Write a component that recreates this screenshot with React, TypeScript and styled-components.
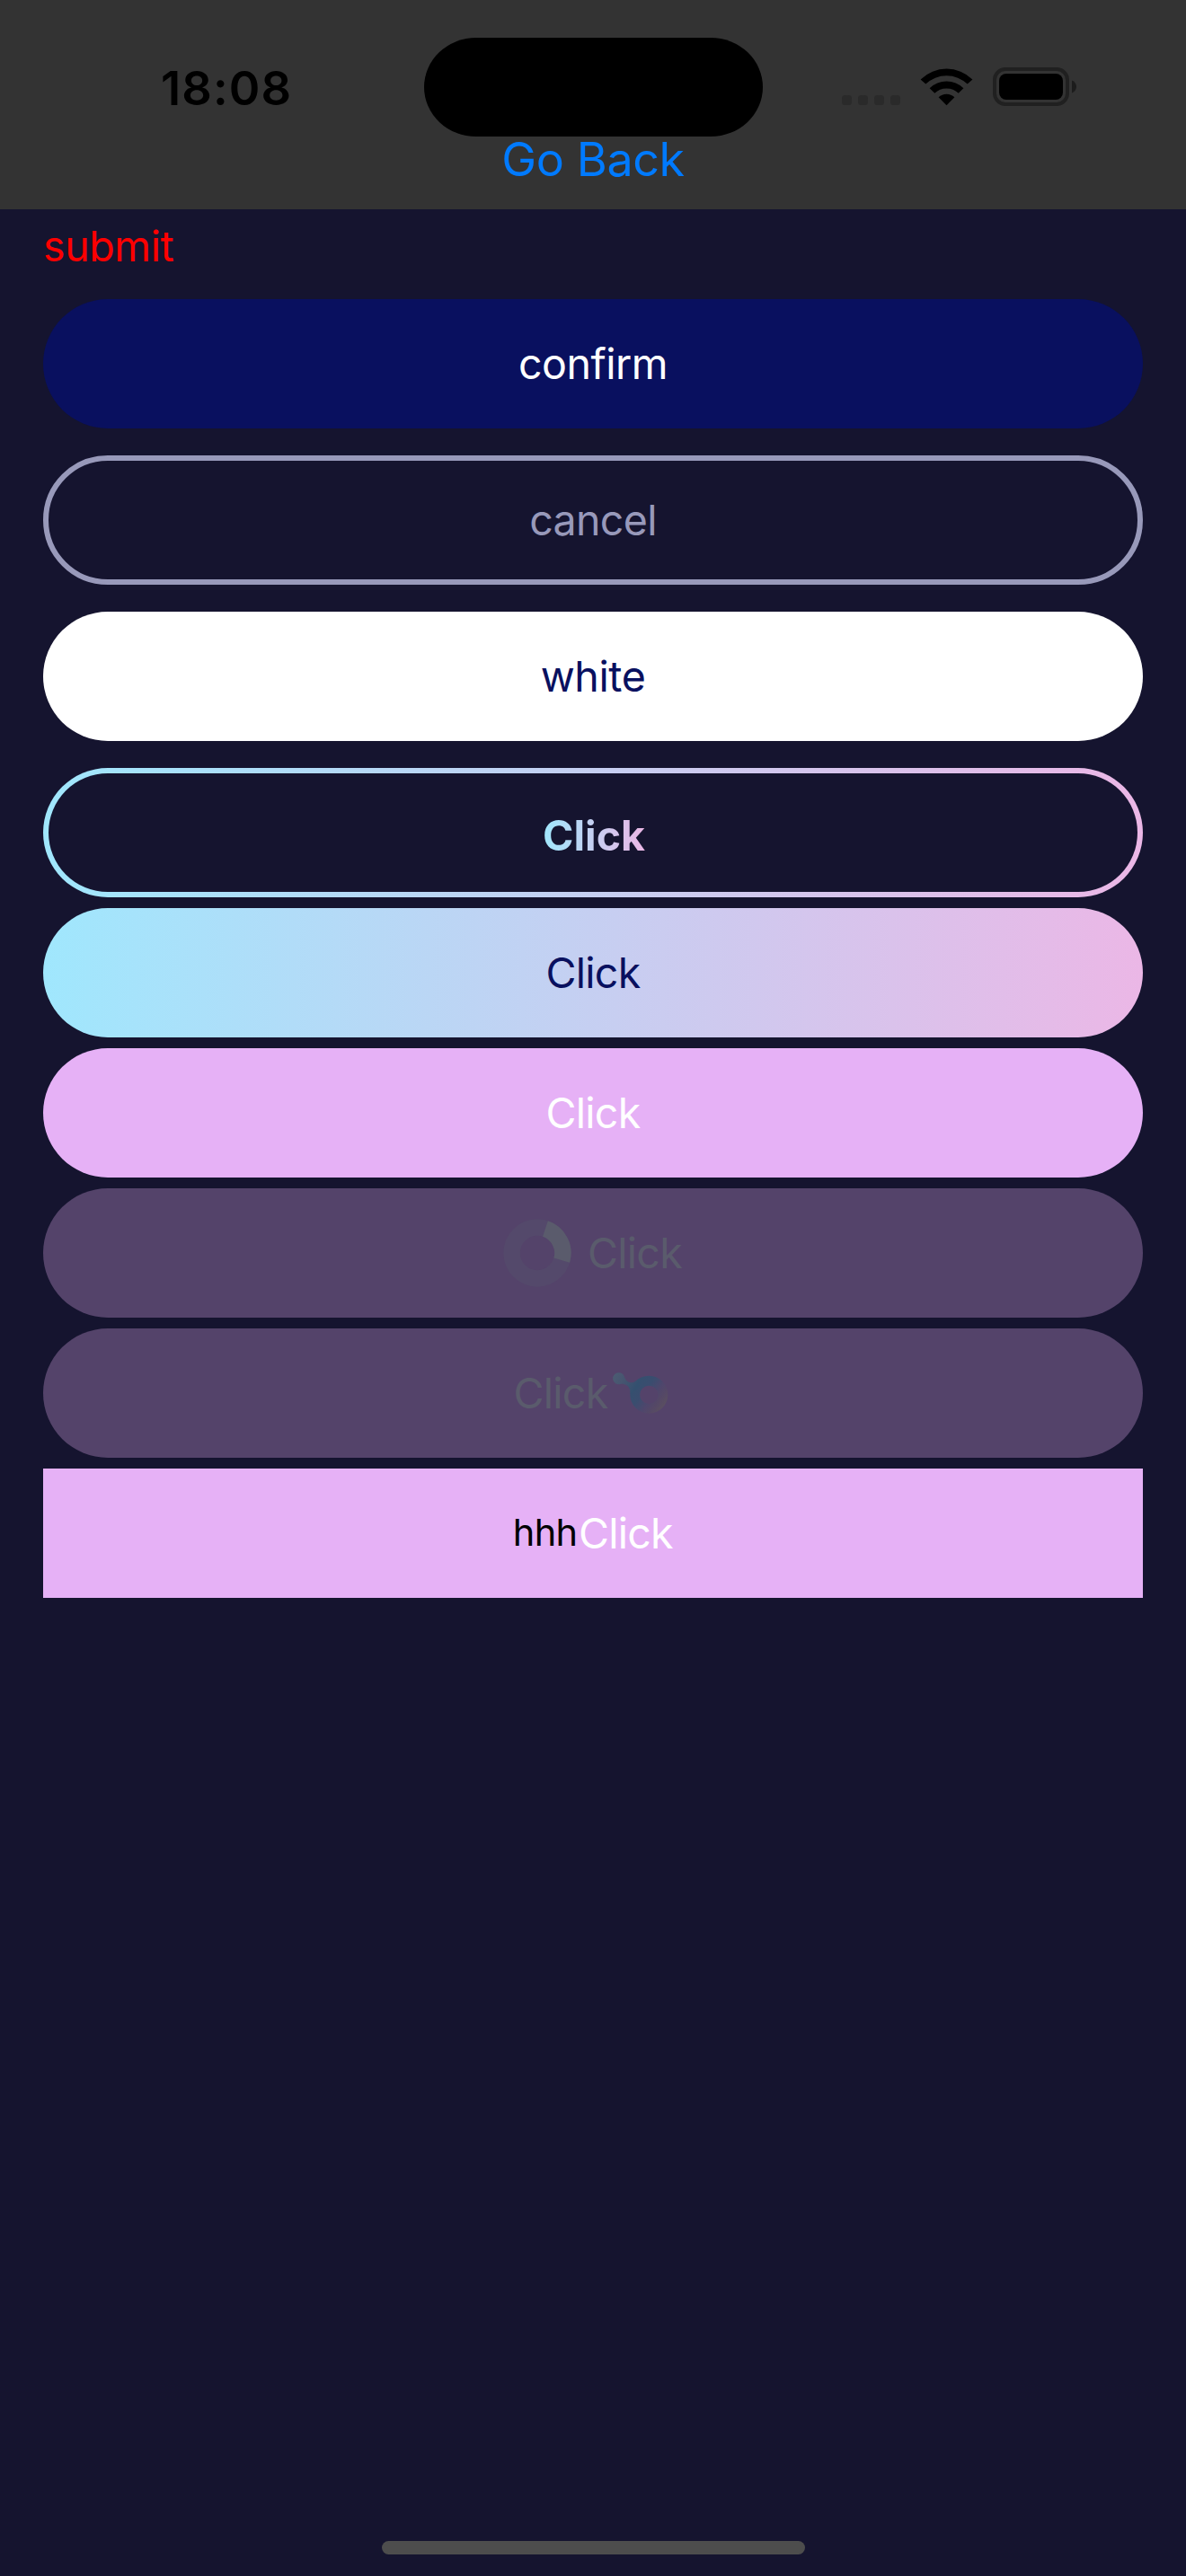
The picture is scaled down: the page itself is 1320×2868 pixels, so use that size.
import React from "react";
import styled, { createGlobalStyle, css } from "styled-components";

const colors = {
  page: "#15142f",
  header: "#333333",
  navy: "#09105f",
  muted: "#9899ba",
  pink: "#e6b1f6",
  disabled: "#54436a",
  disabledText: "#5a5b6c",
  link: "#007aff",
};

const brandGradient = "linear-gradient(90deg, #a0e7fd 0%, #ebb7e6 100%)";

const GlobalStyle = createGlobalStyle`
  html, body { margin: 0; background: ${colors.page}; }
  *, *::before, *::after { box-sizing: border-box; }
`;

const Screen = styled.div`
  display: flex;
  flex-direction: column;
  width: 1320px;
  height: 2868px;
  background: ${colors.page};
  font-family: Inter, "Liberation Sans", sans-serif;
  font-size: 46.5px;
`;

const Header = styled.header`
  display: flex;
  flex-direction: column;
  align-items: center;
  flex: none;
  height: 233px;
  padding-top: 42px;
  background: ${colors.header};
`;

const StatusBar = styled.div`
  display: grid;
  grid-template-columns: 472px 377px 1fr;
  align-items: center;
  width: 100%;
  height: 110px;
`;

const Time = styled.time`
  padding: 2px 0 0 179px;
  font-size: 52.5px;
  font-weight: 600;
  line-height: 60px;
  letter-spacing: 1.1px;
  color: #000;
`;

const Island = styled.div`
  height: 110px;
  border-radius: 58px / 55px;
  background: #000;
`;

const StatusIcons = styled.div`
  display: flex;
  align-items: center;
  gap: 22px;
  padding: 0 0 1px 88px;

  svg {
    display: block;
    flex: none;
  }
`;

const BackLink = styled.button`
  height: 52px;
  padding: 0;
  border: 0;
  background: none;
  font: 400 52px/52px Inter, "Liberation Sans", sans-serif;
  letter-spacing: -0.4px;
  color: ${colors.link};
`;

const Content = styled.main`
  display: flex;
  flex-direction: column;
  padding: 0 48px;
`;

const SubmitLink = styled.button`
  align-self: flex-start;
  height: 82px;
  margin-bottom: 18px;
  padding: 0;
  border: 0;
  background: none;
  font: inherit;
  line-height: 82px;
  letter-spacing: -0.4px;
  color: #ff0000;
`;

const ButtonGroup = styled.div<{ $gap: number }>`
  display: flex;
  flex-direction: column;
  gap: ${(p) => p.$gap}px;

  & + & {
    margin-top: 12px;
  }
`;

type Variant =
  | "confirm"
  | "cancel"
  | "white"
  | "outline"
  | "gradient"
  | "pink"
  | "disabled";

const variants = {
  confirm: css`
    background: ${colors.navy};
    color: #fff;
    letter-spacing: -0.45px;
  `,
  cancel: css`
    border: 6px solid ${colors.muted};
    color: ${colors.muted};
    letter-spacing: -0.65px;
  `,
  white: css`
    background: #fff;
    color: ${colors.navy};
    letter-spacing: -0.4px;
  `,
  outline: css`
    border: 6px solid transparent;
    padding: 6px 0 0 2px;
    background: linear-gradient(${colors.page}, ${colors.page}) padding-box,
      ${brandGradient} border-box;
  `,
  gradient: css`
    background: ${brandGradient};
    color: ${colors.navy};
  `,
  pink: css`
    background: ${colors.pink};
    color: #fff;
  `,
  disabled: css`
    background: ${colors.disabled};
    color: ${colors.disabledText};
  `,
};

const Button = styled.button<{ $variant: Variant; $square?: boolean }>`
  display: flex;
  align-items: center;
  justify-content: center;
  width: 100%;
  height: 144px;
  padding: 0;
  border: 0;
  border-radius: ${(p) => (p.$square ? 0 : 72)}px;
  background: none;
  font: inherit;
  line-height: 56px;
  letter-spacing: -0.75px;
  ${(p) => variants[p.$variant]}

  svg {
    display: block;
    flex: none;
  }
`;

const GradientText = styled.span`
  background: ${brandGradient};
  background-clip: text;
  -webkit-background-clip: text;
  color: transparent;
  font-weight: 700;
  letter-spacing: 0;
`;

const LoadingContent = styled.span`
  display: flex;
  align-items: center;
  gap: 17px;
  margin-right: 2px;
`;

const Prefix = styled.span`
  margin: 0 1.5px 2px -0.5px;
  font-size: 41.5px;
  letter-spacing: -0.65px;
  color: #000;
`;

const HomeIndicator = styled.div`
  width: 471px;
  height: 15px;
  margin: auto 424px 24px 425px;
  border-radius: 8px;
  background: #4d4d4d;
`;

const CellularIcon = () => (
  <svg width="65" height="43" viewBox="0 0 65 43" fill="#2a2a2a">
    {[0, 18, 36, 54].map((x) => (
      <rect key={x} x={x} y="31" width="11" height="11" rx="3.6" />
    ))}
  </svg>
);

const WifiIcon = () => (
  <svg width="59" height="43" viewBox="0 0 59 43" fill="#000">
    <path d="M.6 13.4A41.2 41.2 0 0 1 58.4 13.4L52.7 18.6A33.4 33.4 0 0 0 6.3 18.6Z" />
    <path d="M10.6 23.2A27.2 27.2 0 0 1 48.4 23.2L42.7 28.8A19.2 19.2 0 0 0 16.3 28.8Z" />
    <path d="M20.6 33.3A13 13 0 0 1 38.4 33.3L29.5 42.2Z" />
  </svg>
);

const BatteryIcon = () => (
  <svg width="93" height="43" viewBox="0 0 93 43">
    <rect x="2" y="2" width="81" height="39" rx="12" fill="none" stroke="#202020" strokeWidth="4" />
    <rect x="7" y="7" width="71" height="29" rx="8" fill="#000" />
    <path d="M88 14.6C91 15.6 93 18.4 93 21.5S91 27.4 88 28.4Z" fill="#1c1c1c" />
  </svg>
);

const Spinner = () => (
  <svg width="78" height="78" viewBox="-39 -39 78 78" fill="none" strokeWidth="18.5">
    <circle r="28.4" stroke="#54496b" />
    <path d="M8.96 -26.95A28.4 28.4 0 0 1 27.2 8.17" stroke={colors.disabledText} />
  </svg>
);

const MoleculeIcon = () => (
  <svg width="72" height="72" viewBox="0 0 72 72">
    <defs>
      <linearGradient id="ring" gradientUnits="userSpaceOnUse" x1="30" y1="24" x2="64" y2="50">
        <stop offset="0" stopColor="#34506f" />
        <stop offset="0.35" stopColor="#3a4d6f" />
        <stop offset="0.62" stopColor="#4f466c" />
        <stop offset="0.8" stopColor="#554866" />
        <stop offset="1" stopColor="#5a4f60" />
      </linearGradient>
      <linearGradient id="tail" gradientUnits="userSpaceOnUse" x1="8" y1="16" x2="31" y2="30">
        <stop offset="0" stopColor="#4b5b72" />
        <stop offset="0.4" stopColor="#475570" />
        <stop offset="1" stopColor="#34506f" />
      </linearGradient>
    </defs>
    <path
      fill="url(#ring)"
      fillRule="evenodd"
      d="M46.3 16.7a21 21 0 1 1 0 42a21 21 0 1 1 0-42ZM46.3 27.7a10.2 10.2 0 1 0 0 20.4a10.2 10.2 0 1 0 0-20.4Z"
    />
    <path
      fill="url(#tail)"
      d="M12.7 13.2A6.5 6.5 0 0 1 18.9 17.7C20.2 22.2 23.5 24.6 28 24.3C30.5 24 32.6 22 34.7 20.1L36 29L25.7 36.7C25.6 31 23.4 27.2 19 26.200C17.200 25.800 15.800 25.600 14.500 25.900A6.500 6.500 0 1 1 12.700 13.200Z"
    />
  </svg>
);

export default function App() {
  return (
    <Screen>
      <GlobalStyle />
      <Header>
        <StatusBar>
          <Time>18:08</Time>
          <Island />
          <StatusIcons>
            <CellularIcon />
            <WifiIcon />
            <BatteryIcon />
          </StatusIcons>
        </StatusBar>
        <BackLink>Go Back</BackLink>
      </Header>
      <Content>
        <SubmitLink>submit</SubmitLink>
        <ButtonGroup $gap={30}>
          <Button $variant="confirm">confirm</Button>
          <Button $variant="cancel">cancel</Button>
          <Button $variant="white">white</Button>
          <Button $variant="outline">
            <GradientText>Click</GradientText>
          </Button>
        </ButtonGroup>
        <ButtonGroup $gap={12}>
          <Button $variant="gradient">Click</Button>
          <Button $variant="pink">Click</Button>
          <Button $variant="disabled" disabled>
            <LoadingContent>
              <Spinner />
              Click
            </LoadingContent>
          </Button>
          <Button $variant="disabled" disabled>
            Click
            <MoleculeIcon />
          </Button>
          <Button $variant="pink" $square>
            <Prefix>hhh</Prefix>
            Click
          </Button>
        </ButtonGroup>
      </Content>
      <HomeIndicator />
    </Screen>
  );
}
